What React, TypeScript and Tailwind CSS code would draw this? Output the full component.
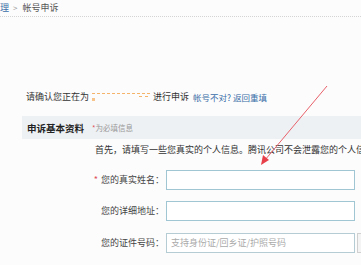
import React from "react";

export default function App() {
  return (
    <div
      className="relative w-[361px] h-[265px] overflow-hidden bg-[#fcfcfc] text-[#333] text-[9px] leading-[12px]"
      style={{ fontFamily: '"Noto Sans CJK SC", "Noto Sans", sans-serif' }}
    >
      {/* breadcrumb */}
      <div className="flex items-center h-[17px] border-b border-dotted border-[#d4d4d4] gap-[4px] pl-0 text-[9px]">
        <span className="text-[#3a6ea8]">理</span>
        <span className="text-[#999] text-[8px]">&gt;</span>
        <span className="text-[#555] ml-[1px]">帐号申诉</span>
      </div>

      {/* confirm line */}
      <div className="mt-[74px] pl-[26px] flex items-center h-[12px]">
        <span>请确认您正在为</span>
        <span className="relative inline-block w-[58px] h-[12px] mx-[3px]">
          <span className="absolute left-0 top-[2px] w-[58px] border-t border-dashed border-[#f5b46a]"></span>
          <span className="absolute left-0 top-[7px] w-[3px] h-[3px] bg-[#f7c58c]"></span>
          <span className="absolute right-[2px] top-[5px] w-[9px] border-t border-dashed border-[#f5b46a]"></span>
        </span>
        <span>进行申诉</span>
        <span className="ml-[4px] text-[#3a6ea8] text-[8.5px]">帐号不对? 返回重填</span>
      </div>

      {/* section bar */}
      <div className="mt-[13px] ml-[22px] h-[23px] bg-[#eef1f4] flex items-center pl-[5px]">
        <span className="font-bold text-[9.5px] text-[#222]">申诉基本资料</span>
        <span className="ml-[8px] text-[7.5px] text-[#999]">
          <span className="text-[#e0505a]">*</span>为必填信息
        </span>
      </div>

      {/* intro */}
      <div className="mt-[5px] pl-[95px] whitespace-nowrap h-[12px] text-[#333]">
        首先，请填写一些您真实的个人信息。腾讯公司不会泄露您的个人信息
      </div>

      {/* form */}
      <div className="mt-[14px] flex flex-col gap-[11px]">
        <div className="flex items-center h-[20px]">
          <div className="w-[166px] shrink-0 pr-[2px] flex justify-end items-center text-[#444]">
            <span className="text-[#e0505a] mr-[3px]">*</span>
            <span>您的真实姓名：</span>
          </div>
          <div className="w-[189px] shrink-0 h-[20px] border border-[#9fc6d2] bg-white"></div>
        </div>
        <div className="flex items-center h-[20px]">
          <div className="w-[166px] shrink-0 pr-[2px] flex justify-end items-center text-[#444]">
            <span>您的详细地址：</span>
          </div>
          <div className="w-[189px] shrink-0 h-[20px] border border-[#9fc6d2] bg-white"></div>
        </div>
        <div className="flex items-center h-[20px] mt-[1px]">
          <div className="w-[166px] shrink-0 pr-[2px] flex justify-end items-center text-[#444]">
            <span>您的证件号码：</span>
          </div>
          <div className="w-[189px] shrink-0 h-[20px] border border-[#b5ccd4] bg-white flex items-center pl-[4px] text-[#aaa] whitespace-nowrap">
            支持身份证/回乡证/护照号码
          </div>
          <div className="ml-[2px] shrink-0 w-[10px] h-[20px] border border-[#d0d0d0] bg-[#f4f4f4]"></div>
        </div>
      </div>

      {/* red arrow annotation */}
      <svg
        className="absolute left-0 top-0"
        width="361"
        height="265"
        viewBox="0 0 361 265"
      >
        <line x1="327" y1="86" x2="265" y2="160" stroke="#e8606a" strokeWidth="1" />
        <polygon points="261,165 263,155 269,160" fill="#e8404a" />
      </svg>
    </div>
  );
}
